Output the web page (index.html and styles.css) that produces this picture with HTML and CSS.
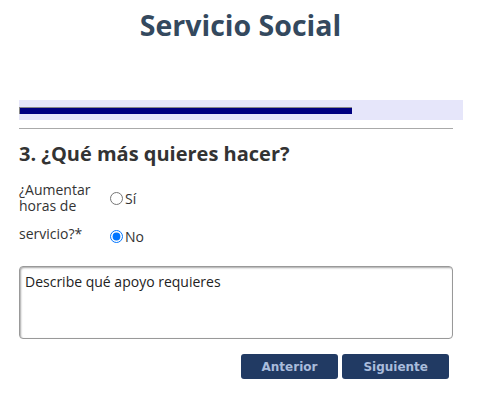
FILE: index.html
```html
<!DOCTYPE html>
<html lang="es">
<head>
    <meta charset="UTF-8">
    <meta name="viewport" content="width=device-width, initial-scale=1.0">
    <title>Servicio Social</title>
    <link rel="stylesheet" href="styles.css">
</head>
<body>
    <h1 class="title">Servicio Social</h1>

    <div class="container">
        <div class="progress">
            <div class="progress-bar" style="width: 75%"></div>
        </div>
        <hr class="divider">

        <h3 class="step-title">3. ¿Qué más quieres hacer?</h3>

        <div class="question">
            <div class="question-row">
                <span class="question-label">¿Aumentar horas de</span>
                <label class="option"><input type="radio" name="horas" value="si"> Sí</label>
            </div>
            <div class="question-row second">
                <span class="question-label">servicio?*</span>
                <label class="option"><input type="radio" name="horas" value="no" checked> No</label>
            </div>
        </div>

        <textarea class="support" placeholder="Describe qué apoyo requieres"></textarea>

        <div class="nav-buttons">
            <button class="btn">Anterior</button>
            <button class="btn">Siguiente</button>
        </div>
    </div>
</body>
</html>
```

FILE: styles.css
```css
body {
    margin: 0;
    font-family: "Open Sans", Arial, sans-serif;
    color: #333;
    background-color: #fff;
}
.title {
    margin: 5px 0 0;
    text-align: center;
    font-size: 28.5px;
    font-weight: bold;
    line-height: 40px;
    color: #34495e;
}
.container {
    width: 434px;
    margin-left: 19px;
}
.progress {
    width: 444px;
    height: 20px;
    margin-top: 55px;
    padding-top: 7px;
    box-sizing: border-box;
    background-color: #e6e6fa;
}
.progress-bar {
    height: 7px;
    box-sizing: border-box;
    background-color: #000080;
    border-top: 1px solid #888;
    border-left: 1px solid #888;
}
.divider {
    margin: 8px 0 0;
    border: none;
    border-top: 1px solid #aaa;
}
.step-title {
    margin: 12px 0 0;
    font-size: 20px;
    font-weight: bold;
    line-height: 26px;
    color: #333;
}
.question {
    margin-top: 15px;
    font-size: 14px;
}
.question-row {
    display: flex;
    align-items: center;
}
.question-row.second {
    margin-top: 7px;
}
.question-label {
    width: 86px;
    line-height: 16px;
}
.option {
    display: flex;
    align-items: center;
}
.option input {
    margin: 0 2px 0 5px;
    width: 13px;
    height: 13px;
}
.question-row.second .option {
    margin-top: 6px;
}
.support {
    display: block;
    width: 434px;
    height: 73px;
    margin-top: 20px;
    padding: 5px 5px;
    box-sizing: border-box;
    border: 1px solid #999;
    border-radius: 4px;
    box-shadow: inset 1px 1px 2px rgba(0,0,0,0.35);
    font-family: "Open Sans", Arial, sans-serif;
    font-size: 14px;
    resize: none;
}
.support::placeholder {
    color: #222;
    opacity: 1;
}
.nav-buttons {
    display: flex;
    justify-content: flex-end;
    gap: 4px;
    margin: 15px 4px 0 0;
}
.btn {
    height: 25px;
    padding: 0 21px;
    border: none;
    border-radius: 3px;
    background-color: #213a63;
    color: #a9bcdc;
    font-family: "DejaVu Sans", Verdana, sans-serif;
    font-size: 12px;
    font-weight: bold;
    cursor: pointer;
}
```
